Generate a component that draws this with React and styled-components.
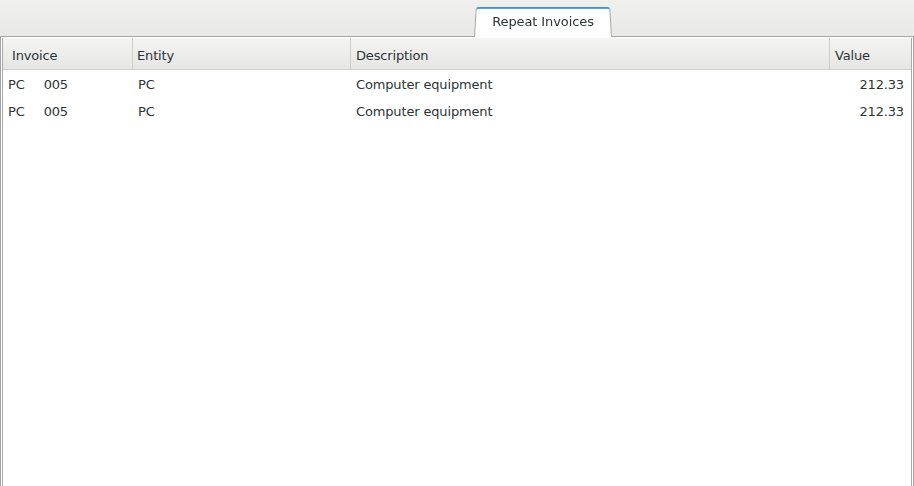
import React from "react";
import styled, { createGlobalStyle } from "styled-components";

const GlobalStyle = createGlobalStyle`
  html, body {
    margin: 0;
    padding: 0;
    overflow: hidden;
    background: #ededed;
    font-family: "DejaVu Sans", "Liberation Sans", sans-serif;
    font-size: 13px;
    color: #2e3436;
  }
`;

const Window = styled.div`
  width: 914px;
  height: 486px;
  display: flex;
  flex-direction: column;
`;

const TabBar = styled.div`
  height: 36px;
  display: flex;
  align-items: flex-end;
  padding-left: 474px;
  background: linear-gradient(#f0f0ef, #e9e9e8);
`;

const Tab = styled.div`
  position: relative;
  width: 138px;
  height: 30px;
  display: flex;
  align-items: center;
  justify-content: center;
  box-sizing: border-box;

  &::before {
    content: "";
    position: absolute;
    inset: 0 0 -1px 0;
    background: #ffffff;
    border: 1px solid #a6a6a6;
    border-top: 2px solid #4a90d9;
    border-bottom: none;
    border-radius: 3px 3px 0 0;
    transform: perspective(120px) rotateX(6deg);
    transform-origin: bottom;
  }
`;

const TabLabel = styled.span`
  position: relative;
  margin-top: 1px;
  letter-spacing: -0.1px;
`;

const Panel = styled.div`
  flex: 1;
  border: 1px solid #a4a4a4;
  border-bottom: none;
  padding: 1px 1px 0 1px;
  background: #ffffff;
  display: flex;
`;

const Table = styled.div`
  flex: 1;
  border: 1px solid #a9a9a9;
  border-top: none;
  border-bottom: none;
  display: flex;
  flex-direction: column;
  letter-spacing: -0.15px;
`;

const COLS = "130px 218px 479px 1fr";

const HeaderRow = styled.div`
  display: grid;
  grid-template-columns: ${COLS};
  height: 32px;
  background: linear-gradient(#f5f5f4, #e5e5e4);
  border-bottom: 1px solid #d2d2d2;
  box-sizing: border-box;
`;

const HeaderCell = styled.div`
  display: flex;
  align-items: center;
  padding-left: ${(p) => p.$pad}px;
  padding-top: 3px;
  border-right: ${(p) => (p.$last ? "none" : "1px solid #cdcdcc")};
  box-sizing: border-box;
`;

const Row = styled.div`
  display: grid;
  grid-template-columns: ${COLS};
  height: 27px;
`;

const Cell = styled.div`
  display: flex;
  align-items: center;
  gap: 19px;
  padding-left: ${(p) => p.$pad || 0}px;
  padding-right: ${(p) => p.$padRight || 0}px;
  justify-content: ${(p) => (p.$right ? "flex-end" : "flex-start")};
  padding-top: 2px;
`;

const rows = [
  { prefix: "PC", num: "005", entity: "PC", desc: "Computer equipment", value: "212.33" },
  { prefix: "PC", num: "005", entity: "PC", desc: "Computer equipment", value: "212.33" },
];

export default function App() {
  return (
    <>
      <GlobalStyle />
      <Window>
        <TabBar>
          <Tab>
            <TabLabel>Repeat Invoices</TabLabel>
          </Tab>
        </TabBar>
        <Panel>
          <Table>
            <HeaderRow>
              <HeaderCell $pad={9}>Invoice</HeaderCell>
              <HeaderCell $pad={4}>Entity</HeaderCell>
              <HeaderCell $pad={5}>Description</HeaderCell>
              <HeaderCell $pad={5} $last>Value</HeaderCell>
            </HeaderRow>
            {rows.map((r, i) => (
              <Row key={i}>
                <Cell $pad={5}>
                  <span>{r.prefix}</span>
                  <span>{r.num}</span>
                </Cell>
                <Cell $pad={5}>{r.entity}</Cell>
                <Cell $pad={5}>{r.desc}</Cell>
                <Cell $right $padRight={7}>{r.value}</Cell>
              </Row>
            ))}
          </Table>
        </Panel>
      </Window>
    </>
  );
}
